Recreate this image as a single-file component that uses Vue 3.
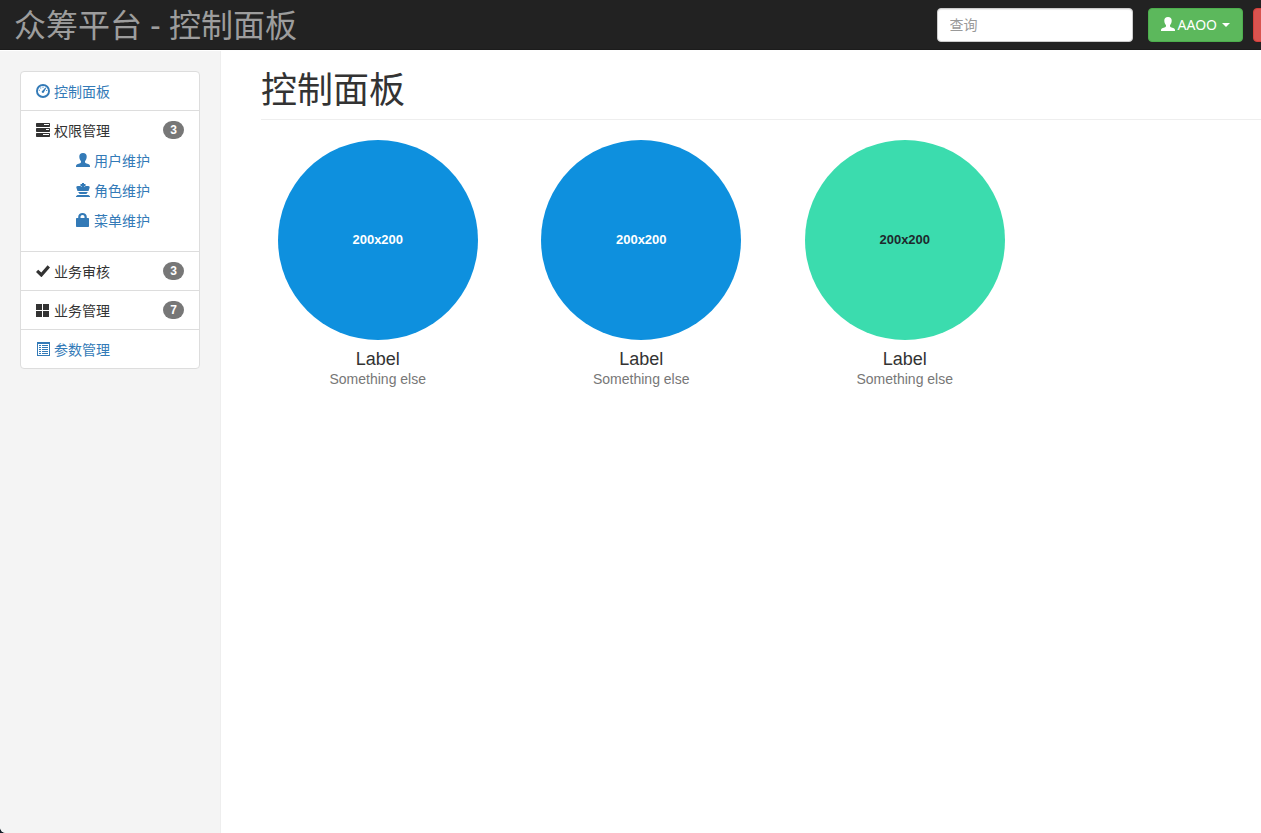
<script setup>
import { ref } from 'vue'

const query = ref('')

const menu = [
  { icon: 'dashboard', text: '控制面板', link: true },
  {
    icon: 'tasks',
    text: '权限管理',
    count: 3,
    children: [
      { icon: 'user', text: '用户维护' },
      { icon: 'king', text: '角色维护' },
      { icon: 'lock', text: '菜单维护' },
    ],
  },
  { icon: 'ok', text: '业务审核', count: 3 },
  { icon: 'grid', text: '业务管理', count: 7 },
  { icon: 'list', text: '参数管理', link: true },
]

const cards = [
  { tone: 'blue', size: '200x200', label: 'Label', note: 'Something else' },
  { tone: 'blue', size: '200x200', label: 'Label', note: 'Something else' },
  { tone: 'green', size: '200x200', label: 'Label', note: 'Something else' },
]

const icons = {
  user: 'M7 0C4.500 0 3.300 1.500 3.300 3.500c0 2.200.8 3.700 1.700 4.700v.8c0 .6-.3.900-.9 1.200L1.200 11.300C.4 11.700 0 12.200 0 12.900V14h14v-1.100c0-.7-.4-1.200-1.200-1.600L9.900 10.200C9.300 9.900 9 9.600 9 9v-.8c.9-1 1.700-2.500 1.700-4.700C10.700 1.500 9.500 0 7 0z',
  king: 'M6 0h2v1h1.500v2H8v.8c.6-.6 1.300-.8 2-.8h2.300c1 0 1.600.8 1.300 1.700L12.500 8h-11L.4 4.700C.1 3.800.7 3 1.700 3H4c.7 0 1.400.2 2 .8V3H4.500V1H6zM2.500 9h9v1h-9zM3.500 10h7l.5 1H3zM1.500 12h11L14 13.300V14H0v-.7z',
  lock: 'M2.200 5V4c0-2.400 1.900-4 4.300-4s4.300 1.600 4.300 4v1h1.500c.4 0 .7.300.7.700v7.600c0 .4-.3.700-.7.700H.7c-.4 0-.7-.3-.7-.7V5.700C0 5.300.300 5 .7 5zm2.300 0h4V4c0-1.200-.8-2-2-2s-2 .8-2 2z',
  ok: 'M2.200 5.700 5.300 8.600 11.600 1.200 14 3.500 5.900 12.800c-.3.400-.7.400-1 0L0 7.900z',
  grid: 'M0 1h6v6H0zM7 1h6v6H7zM0 8h6v6H0zM7 8h6v6H7z',
  tasks: 'M.7 0h12.600c.4 0 .7.3.7.7v2.600c0 .4-.3.700-.7.700H.7C.3 4 0 3.700 0 3.300V.7C0 .3.300 0 .7 0zM8 1v1h5V1zM.7 5h12.600c.4 0 .7.300.7.7v2.600c0 .4-.3.700-.7.700H.7C.3 9 0 8.700 0 8.300V5.700C0 5.300.3 5 .7 5zM10 6v1h3V6zM.7 10h12.600c.4 0 .7.300.7.7v2.600c0 .4-.3.700-.7.700H.7c-.4 0-.7-.3-.7-.7v-2.600c0-.4.3-.7.700-.7zM7 11v1h6v-1z',
  list: 'M1 0h13v14H1zM2 2v11h11V2zM3 3h2v1H3zM6 3h6v1H6zM3 5h2v1H3zM6 5h6v1H6zM3 7h2v1H3zM6 7h6v1H6zM3 9h2v1H3zM6 9h6v1H6zM3 11h2v1H3zM6 11h6v1H6z',
  dashboard: 'M7 0a7 7 0 1 0 0 14A7 7 0 0 0 7 0zm0 1.900a5.100 5.100 0 1 1 0 10.200A5.100 5.100 0 0 1 7 1.900zM6.500 2.700h1v1h-1zM4.200 3.600h1v1h-1zM2.800 5.800h1v1h-1zM10.200 6h1v1h-1zM9.400 3.400l.8.600-2 3.800c-.2.800-.7 1.200-1.300 1.200-.7 0-1.200-.5-1.200-1.200 0-.6.400-1 1-1.200z',
}
</script>

<template>
  <div class="page">
    <header class="navbar">
      <a class="brand" href="#">众筹平台 - 控制面板</a>
      <form class="tools" @submit.prevent>
        <input v-model="query" class="search" type="text" placeholder="查询" aria-label="查询" />
        <div class="buttons">
          <button class="btn success" type="button">
            <svg class="icon" viewBox="0 0 14 14" aria-hidden="true"><path :d="icons.user" /></svg>
            <span>AAOO</span>
            <span class="caret"></span>
          </button>
          <button class="btn danger" type="button" aria-label="帮助"></button>
        </div>
      </form>
    </header>

    <div class="body">
      <nav class="sidebar">
        <ul class="group">
          <li v-for="item in menu" :key="item.text" class="item">
            <div class="row">
              <component :is="item.link ? 'a' : 'span'" class="entry" :href="item.link ? '#' : undefined">
                <svg class="icon" viewBox="0 0 14 14" aria-hidden="true"><path fill-rule="evenodd" :d="icons[item.icon]" /></svg>
                <span>{{ item.text }}</span>
              </component>
              <span v-if="item.count" class="badge">{{ item.count }}</span>
            </div>
            <ul v-if="item.children" class="sub">
              <li v-for="child in item.children" :key="child.text">
                <a class="entry" href="#">
                  <svg class="icon" viewBox="0 0 14 14" aria-hidden="true"><path fill-rule="evenodd" :d="icons[child.icon]" /></svg>
                  <span>{{ child.text }}</span>
                </a>
              </li>
            </ul>
          </li>
        </ul>
      </nav>

      <main class="main">
        <h1>控制面板</h1>
        <div class="cards">
          <section v-for="(card, i) in cards" :key="i" class="card">
            <div class="disc" :class="card.tone">{{ card.size }}</div>
            <h4>{{ card.label }}</h4>
            <span class="note">{{ card.note }}</span>
          </section>
        </div>
      </main>
    </div>
  </div>
</template>

<style>
html {
  overflow: hidden;
}
body {
  margin: 0;
  background: #16202a;
}
</style>

<style scoped>
* {
  box-sizing: border-box;
}
.page {
  display: flex;
  flex-direction: column;
  min-width: 1325px;
  min-height: 100vh;
  background: #fff;
  border-bottom-left-radius: 6px;
  overflow: hidden;
  color: #333;
  font: 14px/20px "Liberation Sans", "Noto Sans CJK SC", sans-serif;
}
a {
  color: #337ab7;
  text-decoration: none;
}
ul {
  list-style: none;
  margin: 0;
  padding: 0;
}
.icon {
  width: 14px;
  height: 14px;
  flex: none;
  margin-bottom: 2px;
  fill: currentColor;
}
.navbar {
  display: flex;
  justify-content: space-between;
  align-items: center;
  height: 50px;
  padding-left: 14px;
  background: #222;
  border-bottom: 1px solid #1c1c1c;
}
.brand {
  color: #9d9d9d;
  font-family: "Noto Sans", "Noto Sans CJK SC", sans-serif;
  font-size: 32px;
  font-weight: 400;
  line-height: 48px;
}
.tools {
  display: flex;
  gap: 15px;
}
.search {
  width: 196px;
  height: 34px;
  padding: 6px 12px;
  border: 1px solid #ccc;
  border-radius: 4px;
  background: #fff;
  box-shadow: inset 0 1px 1px rgba(0, 0, 0, 0.075);
  color: #555;
  font: inherit;
}
.search::placeholder {
  color: #999;
}
.buttons {
  display: flex;
  gap: 10px;
}
.btn {
  display: flex;
  align-items: center;
  gap: 3px;
  height: 34px;
  padding: 0 12px;
  border: 1px solid;
  border-radius: 4px;
  color: #fff;
  font: 14px/20px "Noto Sans", "Noto Sans CJK SC", sans-serif;
}
.success {
  background: #5cb85c;
  border-color: #4cae4c;
}
.danger {
  width: 72px;
  background: #d9534f;
  border-color: #d43f3a;
}
.caret {
  margin-left: 2px;
  border-top: 4px solid;
  border-left: 4px solid transparent;
  border-right: 4px solid transparent;
}
.body {
  display: flex;
  flex: 1;
  padding-top: 1px;
}
.sidebar {
  flex: 0 0 221px;
  padding: 20px;
  background: #f4f4f4;
  border-right: 1px solid #eee;
}
.group {
  background: #fff;
  border: 1px solid #ddd;
  border-radius: 4px;
}
.item {
  padding: 10px 15px 8px;
}
.item + .item {
  border-top: 1px solid #ddd;
}
.row {
  display: flex;
  justify-content: space-between;
  align-items: flex-start;
  height: 20px;
}
.entry {
  display: flex;
  align-items: center;
  gap: 4px;
}
.badge {
  min-width: 10px;
  padding: 3px 7px;
  border-radius: 10px;
  background: #777;
  color: #fff;
  font-size: 12px;
  font-weight: 700;
  line-height: 12px;
  text-align: center;
}
.sub {
  padding: 10px 0 2px 40px;
}
.sub li {
  height: 30px;
}
.main {
  flex: 1;
  padding: 0 40px;
}
h1 {
  margin: 17px 0 20px;
  padding-bottom: 7px;
  border-bottom: 1px solid #eee;
  font-family: "Noto Sans", "Noto Sans CJK SC", sans-serif;
  font-size: 36px;
  font-weight: 400;
  line-height: 44px;
}
.cards {
  display: grid;
  grid-template-columns: repeat(4, 1fr);
  margin: 0 -15px;
}
.card {
  display: flex;
  flex-direction: column;
  align-items: center;
}
.disc {
  display: grid;
  place-items: center;
  width: 200px;
  height: 200px;
  border-radius: 50%;
  font-size: 13px;
  font-weight: 700;
}
.blue {
  background: #0e90de;
  color: #fff;
}
.green {
  background: #3bdcae;
  color: #1e292d;
}
h4 {
  margin: 9px 0 0;
  font-size: 18px;
  font-weight: 400;
  line-height: 20px;
}
.note {
  color: #777;
}
</style>
